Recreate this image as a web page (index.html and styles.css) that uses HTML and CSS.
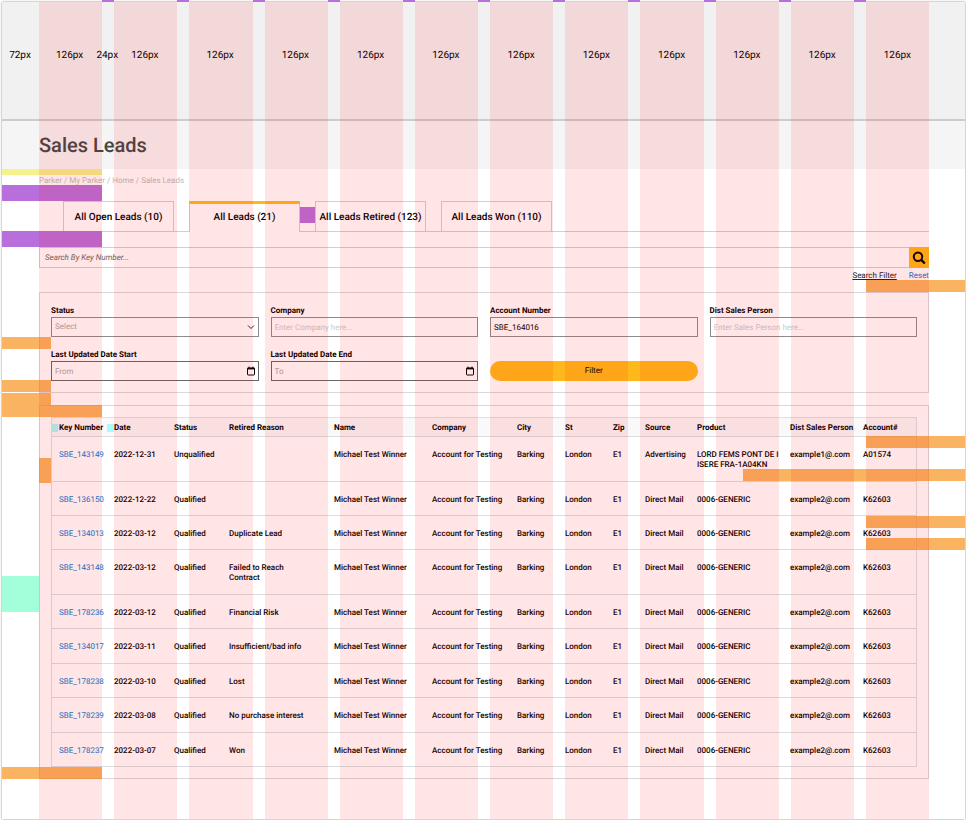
FILE: index.html
```html
<!DOCTYPE html>
<html lang="en">
<head>
<meta charset="utf-8">
<meta name="viewport" content="width=device-width, initial-scale=1">
<title>Sales Leads</title>
<link rel="stylesheet" href="styles.css">
</head>
<body>
<div class="page">
  <header class="ruler">
    <span class="ruler-margin">72px</span>
    <div class="ruler-cols">
      <span>126px</span><span><i class="gutter-label">24px</i>126px</span><span>126px</span><span>126px</span><span>126px</span><span>126px</span><span>126px</span><span>126px</span><span>126px</span><span>126px</span><span>126px</span><span>126px</span>
    </div>
  </header>

  <div class="title-band"><h1>Sales Leads</h1></div>

  <main class="content">
    <nav class="crumbs"><a href="#">Parker</a> / <a href="#">My Parker</a> / <a href="#">Home</a> / <a href="#">Sales Leads</a></nav>

    <div class="tabs">
      <button class="tab" type="button">All Open Leads (10)</button>
      <button class="tab active" type="button">All Leads (21)</button>
      <button class="tab" type="button">All Leads Retired (123)</button>
      <button class="tab" type="button">All Leads Won (110)</button>
    </div>

    <form class="search">
      <input type="text" aria-label="Search By Key Number" placeholder="Search By Key Number...">
      <button type="button" aria-label="Search">
        <svg viewBox="0 0 20 20" width="20" height="20" fill="none" stroke="#000"><circle cx="9" cy="8.7" r="4.2" stroke-width="2"/><path d="M12 11.7l3.8 3.8" stroke-width="2.4"/></svg>
      </button>
    </form>
    <div class="search-links"><a class="toggle" href="#">Search Filter</a><a class="reset" href="#">Reset</a></div>

    <form class="panel filters">
      <div class="field">
        <label for="status">Status</label>
        <div class="control">
          <select id="status"><option>Select</option></select>
          <svg class="icon" viewBox="0 0 10 10" width="10" height="10" fill="none" stroke="#222"><path d="M2 3.5l3 3 3-3"/></svg>
        </div>
      </div>
      <div class="field">
        <label for="company">Company</label>
        <div class="control"><input id="company" class="light" type="text" placeholder="Enter Company here..."></div>
      </div>
      <div class="field">
        <label for="account">Account Number</label>
        <div class="control"><input id="account" type="text" value="SBE_164016"></div>
      </div>
      <div class="field">
        <label for="person">Dist Sales Person</label>
        <div class="control"><input id="person" class="light" type="text" placeholder="Enter Sales Person here..."></div>
      </div>
      <div class="field">
        <label for="from">Last Updated Date Start</label>
        <div class="control">
          <input id="from" class="date" type="text" placeholder="From">
          <svg class="icon" viewBox="0 0 10 10" width="10" height="10" fill="none" stroke="#000"><rect x="1.5" y="2" width="7" height="7" rx=".5"/><path d="M1.5 2.6h7" stroke-width="1.6"/><path d="M3 .6v1.8M7 .6v1.8"/></svg>
        </div>
      </div>
      <div class="field">
        <label for="to">Last Updated Date End</label>
        <div class="control">
          <input id="to" class="date" type="text" placeholder="To">
          <svg class="icon" viewBox="0 0 10 10" width="10" height="10" fill="none" stroke="#000"><rect x="1.5" y="2" width="7" height="7" rx=".5"/><path d="M1.5 2.6h7" stroke-width="1.6"/><path d="M3 .6v1.8M7 .6v1.8"/></svg>
        </div>
      </div>
      <button class="apply" type="button">Filter</button>
    </form>

    <section class="panel">
      <table>
        <colgroup><col class="c-key"><col class="c-date"><col class="c-status"><col class="c-reason"><col class="c-name"><col class="c-company"><col class="c-city"><col class="c-st"><col class="c-zip"><col class="c-source"><col class="c-product"><col class="c-person"><col class="c-account"></colgroup>
        <thead>
          <tr><th>Key Number</th><th>Date</th><th>Status</th><th>Retired Reason</th><th>Name</th><th>Company</th><th>City</th><th>St</th><th>Zip</th><th>Source</th><th>Product</th><th>Dist Sales Person</th><th>Account#</th></tr>
        </thead>
        <tbody>
          <tr><td><a href="#">SBE_143149</a></td><td>2022-12-31</td><td>Unqualified</td><td></td><td>Michael Test Winner</td><td>Account for Testing</td><td>Barking</td><td>London</td><td>E1</td><td>Advertising</td><td>LORD FEMS PONT DE I<br>ISERE FRA-1A04KN</td><td>example1@.com</td><td>A01574</td></tr>
          <tr><td><a href="#">SBE_136150</a></td><td>2022-12-22</td><td>Qualified</td><td></td><td>Michael Test Winner</td><td>Account for Testing</td><td>Barking</td><td>London</td><td>E1</td><td>Direct Mail</td><td>0006-GENERIC</td><td>example2@.com</td><td>K62603</td></tr>
          <tr><td><a href="#">SBE_134013</a></td><td>2022-03-12</td><td>Qualified</td><td>Duplicate Lead</td><td>Michael Test Winner</td><td>Account for Testing</td><td>Barking</td><td>London</td><td>E1</td><td>Direct Mail</td><td>0006-GENERIC</td><td>example2@.com</td><td>K62603</td></tr>
          <tr><td><a href="#">SBE_143148</a></td><td>2022-03-12</td><td>Qualified</td><td>Failed to Reach<br>Contract</td><td>Michael Test Winner</td><td>Account for Testing</td><td>Barking</td><td>London</td><td>E1</td><td>Direct Mail</td><td>0006-GENERIC</td><td>example2@.com</td><td>K62603</td></tr>
          <tr><td><a href="#">SBE_178236</a></td><td>2022-03-12</td><td>Qualified</td><td>Financial Risk</td><td>Michael Test Winner</td><td>Account for Testing</td><td>Barking</td><td>London</td><td>E1</td><td>Direct Mail</td><td>0006-GENERIC</td><td>example2@.com</td><td>K62603</td></tr>
          <tr><td><a href="#">SBE_134017</a></td><td>2022-03-11</td><td>Qualified</td><td>Insufficient/bad info</td><td>Michael Test Winner</td><td>Account for Testing</td><td>Barking</td><td>London</td><td>E1</td><td>Direct Mail</td><td>0006-GENERIC</td><td>example2@.com</td><td>K62603</td></tr>
          <tr><td><a href="#">SBE_178238</a></td><td>2022-03-10</td><td>Qualified</td><td>Lost</td><td>Michael Test Winner</td><td>Account for Testing</td><td>Barking</td><td>London</td><td>E1</td><td>Direct Mail</td><td>0006-GENERIC</td><td>example2@.com</td><td>K62603</td></tr>
          <tr><td><a href="#">SBE_178239</a></td><td>2022-03-08</td><td>Qualified</td><td>No purchase interest</td><td>Michael Test Winner</td><td>Account for Testing</td><td>Barking</td><td>London</td><td>E1</td><td>Direct Mail</td><td>0006-GENERIC</td><td>example2@.com</td><td>K62603</td></tr>
          <tr><td><a href="#">SBE_178237</a></td><td>2022-03-07</td><td>Qualified</td><td>Won</td><td>Michael Test Winner</td><td>Account for Testing</td><td>Barking</td><td>London</td><td>E1</td><td>Direct Mail</td><td>0006-GENERIC</td><td>example2@.com</td><td>K62603</td></tr>
        </tbody>
      </table>
    </section>
  </main>

  <!-- Spacing markers -->
  <div class="markers" aria-hidden="true">
    <i class="m yellow wide m1"></i>
    <i class="m purple wide m2"></i>
    <i class="m purple wide m3"></i>
    <i class="m purple m4"></i>
    <i class="m orange edge m5"></i>
    <i class="m orange edge m6"></i>
    <i class="m orange edge m7"></i>
    <i class="m orange wide m8"></i>
    <i class="m orange m9"></i>
    <i class="m orange wide m10"></i>
    <i class="m orange right m11"></i>
    <i class="m orange right m12"></i>
    <i class="m orange right long m13"></i>
    <i class="m orange right m14"></i>
    <i class="m orange right m15"></i>
    <i class="m mint m16"></i>
    <i class="m cyan m17"></i>
    <i class="m cyan m18"></i>
  </div>

  <!-- Twelve-column layout grid -->
  <div class="grid-overlay" aria-hidden="true"><i></i><i></i><i></i><i></i><i></i><i></i><i></i><i></i><i></i><i></i><i></i><i></i></div>
</div>
</body>
</html>
```
FILE: styles.css
```css
* { box-sizing: border-box; }

body {
  margin: 0;
  padding: 2px 1px 2px 2px;
  background: #fff;
  color: #000;
  font: 400 8px/10px Roboto, "Liberation Sans", sans-serif;
  text-rendering: geometricPrecision;
}

h1, i { margin: 0; font-style: normal; }
a { color: #0a78d6; text-decoration: none; }
input, select, button { font: inherit; color: inherit; border-radius: 0; margin: 0; text-rendering: inherit; }

.page {
  position: relative;
  min-height: 816px;
  background: #fff;
  box-shadow: 0 0 2px rgba(0, 0, 0, .5);
}

/* Header with column sizes */
.ruler {
  position: relative;
  display: flex;
  align-items: center;
  height: 119px;
  padding: 0 36px 10px 0;
  background: #f1f1f1;
  border-bottom: 2px solid #ccc;
  font-size: 10px;
  line-height: 12px;
}
.ruler-margin { width: 36px; text-align: center; }
.ruler-cols {
  flex: 1;
  display: grid;
  grid-template-columns: repeat(12, 1fr);
  column-gap: 12px;
  text-align: center;
}
.ruler-cols span { position: relative; }
.gutter-label { position: absolute; left: -18px; width: 24px; }

.title-band {
  display: flex;
  align-items: center;
  height: 48px;
  padding: 0 36px 0 37px;
  background: #f5f5f5;
}
h1 { font-size: 20px; line-height: 24px; font-weight: 500; color: #404848; }

.content { padding: 7px 36px 40px 37px; }

.crumbs { color: #bbb; margin-bottom: 15px; }
.crumbs a { color: inherit; }

/* Tabs */
.tabs {
  display: flex;
  gap: 15px;
  margin-left: 24px;
  border-bottom: 1px solid #d0d0d0;
}
.tab {
  width: 111px;
  height: 30px;
  padding: 2px 0 0;
  background: none;
  border: 1px solid #d0d0d0;
  border-bottom: 0;
  font-size: 10px;
  font-weight: 500;
  white-space: nowrap;
}
.tab.active {
  height: 31px;
  margin-bottom: -1px;
  padding: 0;
  background: #fff;
  border-top: 3px solid #ffb81c;
}

/* Search */
.search { display: flex; height: 21px; margin-top: 15px; border: 1px solid #d0d0d0; }
.search input {
  flex: 1;
  min-width: 0;
  padding: 1px 5px 0;
  border: 0;
  background: none;
  font-style: italic;
}
.search input::placeholder { color: #666; opacity: 1; }
.search button { width: 20px; margin: -1px; height: 21px; padding: 0; border: 0; background: #ffb81c; }
.search svg { display: block; }
.search-links { display: flex; justify-content: flex-end; gap: 12px; margin: 3px 0 11px; }
.toggle { color: #222; text-decoration: underline; }

.panel { padding: 11px; border: 1px solid #d8d8d8; margin-bottom: 12px; }
.panel:last-child { margin-bottom: 0; }

/* Filters */
.filters {
  display: grid;
  grid-template-columns: repeat(4, 1fr);
  gap: 12px;
  align-items: end;
  padding-top: 12px;
}
.field label { display: block; font-weight: 700; line-height: 12px; }
.control { position: relative; display: flex; }
.control input, .control select {
  width: 100%;
  height: 20px;
  padding: 0 3px;
  border: 1px solid #8c8c8c;
  background: none;
  appearance: none;
}
.control select { color: #aaa; }
.control input::placeholder { color: #aaa; opacity: 1; }
.control .light::placeholder { color: #ccc; }
.control .date { border-color: #666; }
.icon { position: absolute; right: 3px; top: 5px; pointer-events: none; }
.apply { height: 20px; border: 0; border-radius: 10px; background: #ffb81c; }

/* Leads table */
table {
  width: 100%;
  height: 350px;
  table-layout: fixed;
  border-collapse: separate;
  border-spacing: 0;
  border: 1px solid #dde0e2;
  border-bottom: 0;
}
th, td { padding: 0; text-align: left; white-space: nowrap; border-bottom: 1px solid #d8dee2; }
th { height: 19px; padding-top: 1px; font-weight: 700; background: #f9f9f9; }
td { padding: 13px 0 10px; vertical-align: top; font-weight: 500; }
td a { font-weight: 400; }
th:first-child, td:first-child { padding-left: 7px; }
.c-key { width: 62px; }
.c-date { width: 60px; }
.c-status { width: 55px; }
.c-reason { width: 105px; }
.c-name { width: 98px; }
.c-company { width: 85px; }
.c-city { width: 48px; }
.c-st { width: 48px; }
.c-zip { width: 32px; }
.c-source { width: 52px; }
.c-product { width: 93px; }
.c-person { width: 73px; }

/* Overlays */
.markers, .grid-overlay { position: absolute; inset: 0; pointer-events: none; }
.grid-overlay {
  display: grid;
  grid-template-columns: repeat(12, 1fr);
  column-gap: 12px;
  padding: 0 36px 0 37px;
}
.grid-overlay i { position: relative; background: rgba(255, 0, 0, .1); }
.grid-overlay i + i::before {
  content: "";
  position: absolute;
  left: -12px;
  top: -2px;
  width: 12px;
  height: 2px;
  background: #b86fdc;
}
.m { position: absolute; height: 12px; }
.yellow { background: #f5f18c; }
.purple { background: #b86fdc; height: 16px; }
.orange { background: rgba(247, 147, 30, .7); }
.mint { background: #a2ffda; }
.cyan { background: #aafafa; }
.wide { left: 0; width: 100px; }
.edge { left: 0; width: 49px; }
.right { right: 0; width: 99px; }
.long { width: 222px; }
.m1 { top: 167px; height: 6px; }
.m2 { top: 183px; }
.m3 { top: 229px; }
.m4 { left: 298px; top: 205px; width: 15px; }
.m5 { top: 335px; }
.m6 { top: 378px; }
.m7 { top: 391px; }
.m8 { top: 403px; }
.m9 { left: 37px; top: 456px; width: 12px; height: 25px; }
.m10 { top: 765px; }
.m11 { top: 278px; }
.m12 { top: 434px; }
.m13 { top: 467px; }
.m14 { top: 514px; }
.m15 { top: 536px; }
.m16 { left: 0; top: 574px; width: 37px; height: 36px; }
.m17 { left: 49px; top: 422px; width: 7px; height: 8px; }
.m18 { left: 105px; top: 422px; width: 7px; height: 8px; }
```
